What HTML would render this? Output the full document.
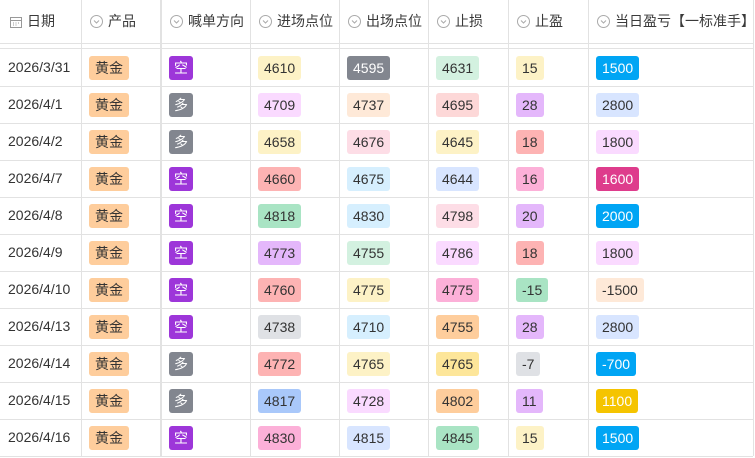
<!DOCTYPE html>
<html><head><meta charset="utf-8"><style>
*{margin:0;padding:0;box-sizing:border-box}
body{width:755px;height:458px;background:#fff;font-family:"Liberation Sans","Noto Sans CJK SC",sans-serif;font-size:14px;color:#333;position:relative;overflow:hidden}
.v{position:absolute;top:0;height:456px;width:1px;background:#e2e2e2}
.h{position:absolute;left:0;width:753px;height:1px;background:#e2e2e2}
.hd{position:absolute;top:0;height:43px;line-height:42px;color:#3a3a3a;font-size:14px;white-space:nowrap}
.hd svg{vertical-align:-2px;margin-right:5px}
.r{position:absolute;left:0;width:753px;height:37px}
.c{position:absolute;top:7px;height:24px;line-height:24px;padding:0 6px;border-radius:3px;font-size:14px;white-space:nowrap;color:#333}
.d{position:absolute;left:8px;top:0;line-height:37px;color:#333}
.w{color:#fff}
</style></head><body>
<div class="v" style="left:81px"></div>
<div class="v" style="left:160px;width:2px"></div>
<div class="v" style="left:250px"></div>
<div class="v" style="left:339px"></div>
<div class="v" style="left:428px"></div>
<div class="v" style="left:508px"></div>
<div class="v" style="left:588px"></div>
<div class="v" style="left:753px"></div>
<div class="h" style="top:43px"></div>
<div class="h" style="top:48px"></div>
<div class="h" style="top:86px"></div>
<div class="h" style="top:123px"></div>
<div class="h" style="top:160px"></div>
<div class="h" style="top:197px"></div>
<div class="h" style="top:234px"></div>
<div class="h" style="top:271px"></div>
<div class="h" style="top:308px"></div>
<div class="h" style="top:345px"></div>
<div class="h" style="top:382px"></div>
<div class="h" style="top:419px"></div>
<div class="h" style="top:456px"></div>

<div class="hd" style="left:10px"><svg width="12" height="12" viewBox="0 0 12 12"><rect x="0.5" y="1.5" width="11" height="10" fill="none" stroke="#999"/><line x1="0.5" y1="4.5" x2="11.5" y2="4.5" stroke="#999"/><path d="M3 7h1M5.5 7h1M8 7h1M3 9h1M5.5 9h1" stroke="#999"/></svg>日期</div>
<div class="hd" style="left:90px"><svg width="13" height="13" viewBox="0 0 13 13"><circle cx="6.5" cy="6.5" r="6" fill="none" stroke="#aaa"/><path d="M4 5.5l2.5 2.5 2.5-2.5" fill="none" stroke="#aaa"/></svg>产品</div>
<div class="hd" style="left:170px"><svg width="13" height="13" viewBox="0 0 13 13"><circle cx="6.5" cy="6.5" r="6" fill="none" stroke="#aaa"/><path d="M4 5.5l2.5 2.5 2.5-2.5" fill="none" stroke="#aaa"/></svg>喊单方向</div>
<div class="hd" style="left:259px"><svg width="13" height="13" viewBox="0 0 13 13"><circle cx="6.5" cy="6.5" r="6" fill="none" stroke="#aaa"/><path d="M4 5.5l2.5 2.5 2.5-2.5" fill="none" stroke="#aaa"/></svg>进场点位</div>
<div class="hd" style="left:348px"><svg width="13" height="13" viewBox="0 0 13 13"><circle cx="6.5" cy="6.5" r="6" fill="none" stroke="#aaa"/><path d="M4 5.5l2.5 2.5 2.5-2.5" fill="none" stroke="#aaa"/></svg>出场点位</div>
<div class="hd" style="left:437px"><svg width="13" height="13" viewBox="0 0 13 13"><circle cx="6.5" cy="6.5" r="6" fill="none" stroke="#aaa"/><path d="M4 5.5l2.5 2.5 2.5-2.5" fill="none" stroke="#aaa"/></svg>止损</div>
<div class="hd" style="left:517px"><svg width="13" height="13" viewBox="0 0 13 13"><circle cx="6.5" cy="6.5" r="6" fill="none" stroke="#aaa"/><path d="M4 5.5l2.5 2.5 2.5-2.5" fill="none" stroke="#aaa"/></svg>止盈</div>
<div class="hd" style="left:597px"><svg width="13" height="13" viewBox="0 0 13 13"><circle cx="6.5" cy="6.5" r="6" fill="none" stroke="#aaa"/><path d="M4 5.5l2.5 2.5 2.5-2.5" fill="none" stroke="#aaa"/></svg>当日盈亏【一标准手】</div>

<div class="r" style="top:49px"><div class="d">2026/3/31</div><div class="c" style="left:89px;background:#fecd9c">黄金</div><div class="c w" style="left:169px;background:#9d36d9;padding:0 5px">空</div><div class="c" style="left:258px;background:#fdf2c6">4610</div><div class="c w" style="left:347px;background:#82868f">4595</div><div class="c" style="left:436px;background:#d3f1e0">4631</div><div class="c" style="left:516px;background:#fdf2c6">15</div><div class="c w" style="left:596px;background:#00a5f4">1500</div></div>
<div class="r" style="top:86px"><div class="d">2026/4/1</div><div class="c" style="left:89px;background:#fecd9c">黄金</div><div class="c w" style="left:169px;background:#82868f;padding:0 5px">多</div><div class="c" style="left:258px;background:#fadaff">4709</div><div class="c" style="left:347px;background:#fee9d8">4737</div><div class="c" style="left:436px;background:#fdd8d8">4695</div><div class="c" style="left:516px;background:#e4b7fb">28</div><div class="c" style="left:596px;background:#d8e5ff">2800</div></div>
<div class="r" style="top:123px"><div class="d">2026/4/2</div><div class="c" style="left:89px;background:#fecd9c">黄金</div><div class="c w" style="left:169px;background:#82868f;padding:0 5px">多</div><div class="c" style="left:258px;background:#fdf2c6">4658</div><div class="c" style="left:347px;background:#fddde6">4676</div><div class="c" style="left:436px;background:#fdf2c6">4645</div><div class="c" style="left:516px;background:#fdb3b3">18</div><div class="c" style="left:596px;background:#fadaff">1800</div></div>
<div class="r" style="top:160px"><div class="d">2026/4/7</div><div class="c" style="left:89px;background:#fecd9c">黄金</div><div class="c w" style="left:169px;background:#9d36d9;padding:0 5px">空</div><div class="c" style="left:258px;background:#fdb3b3">4660</div><div class="c" style="left:347px;background:#d6effe">4675</div><div class="c" style="left:436px;background:#d8e5ff">4644</div><div class="c" style="left:516px;background:#fcb0d8">16</div><div class="c w" style="left:596px;background:#de3c8c">1600</div></div>
<div class="r" style="top:197px"><div class="d">2026/4/8</div><div class="c" style="left:89px;background:#fecd9c">黄金</div><div class="c w" style="left:169px;background:#9d36d9;padding:0 5px">空</div><div class="c" style="left:258px;background:#a9e4c4">4818</div><div class="c" style="left:347px;background:#d6effe">4830</div><div class="c" style="left:436px;background:#fddde6">4798</div><div class="c" style="left:516px;background:#e4b7fb">20</div><div class="c w" style="left:596px;background:#00a5f4">2000</div></div>
<div class="r" style="top:234px"><div class="d">2026/4/9</div><div class="c" style="left:89px;background:#fecd9c">黄金</div><div class="c w" style="left:169px;background:#9d36d9;padding:0 5px">空</div><div class="c" style="left:258px;background:#e4b7fb">4773</div><div class="c" style="left:347px;background:#d3f1e0">4755</div><div class="c" style="left:436px;background:#fadaff">4786</div><div class="c" style="left:516px;background:#fdb3b3">18</div><div class="c" style="left:596px;background:#fadaff">1800</div></div>
<div class="r" style="top:271px"><div class="d">2026/4/10</div><div class="c" style="left:89px;background:#fecd9c">黄金</div><div class="c w" style="left:169px;background:#9d36d9;padding:0 5px">空</div><div class="c" style="left:258px;background:#fdb3b3">4760</div><div class="c" style="left:347px;background:#fdf2c6">4775</div><div class="c" style="left:436px;background:#fcb0d8">4775</div><div class="c" style="left:516px;background:#a9e4c4">-15</div><div class="c" style="left:596px;background:#fee9d8">-1500</div></div>
<div class="r" style="top:308px"><div class="d">2026/4/13</div><div class="c" style="left:89px;background:#fecd9c">黄金</div><div class="c w" style="left:169px;background:#9d36d9;padding:0 5px">空</div><div class="c" style="left:258px;background:#dfe1e5">4738</div><div class="c" style="left:347px;background:#d6effe">4710</div><div class="c" style="left:436px;background:#fecd9c">4755</div><div class="c" style="left:516px;background:#e4b7fb">28</div><div class="c" style="left:596px;background:#d8e5ff">2800</div></div>
<div class="r" style="top:345px"><div class="d">2026/4/14</div><div class="c" style="left:89px;background:#fecd9c">黄金</div><div class="c w" style="left:169px;background:#82868f;padding:0 5px">多</div><div class="c" style="left:258px;background:#fdb3b3">4772</div><div class="c" style="left:347px;background:#fdf2c6">4765</div><div class="c" style="left:436px;background:#fde69a">4765</div><div class="c" style="left:516px;background:#dfe1e5">-7</div><div class="c w" style="left:596px;background:#00a5f4">-700</div></div>
<div class="r" style="top:382px"><div class="d">2026/4/15</div><div class="c" style="left:89px;background:#fecd9c">黄金</div><div class="c w" style="left:169px;background:#82868f;padding:0 5px">多</div><div class="c" style="left:258px;background:#a9c8fa">4817</div><div class="c" style="left:347px;background:#fadaff">4728</div><div class="c" style="left:436px;background:#fecd9c">4802</div><div class="c" style="left:516px;background:#e4b7fb">11</div><div class="c w" style="left:596px;background:#f5c400">1100</div></div>
<div class="r" style="top:419px"><div class="d">2026/4/16</div><div class="c" style="left:89px;background:#fecd9c">黄金</div><div class="c w" style="left:169px;background:#9d36d9;padding:0 5px">空</div><div class="c" style="left:258px;background:#fcb0d8">4830</div><div class="c" style="left:347px;background:#d8e5ff">4815</div><div class="c" style="left:436px;background:#a9e4c4">4845</div><div class="c" style="left:516px;background:#fdf2c6">15</div><div class="c w" style="left:596px;background:#00a5f4">1500</div></div>
</body></html>
